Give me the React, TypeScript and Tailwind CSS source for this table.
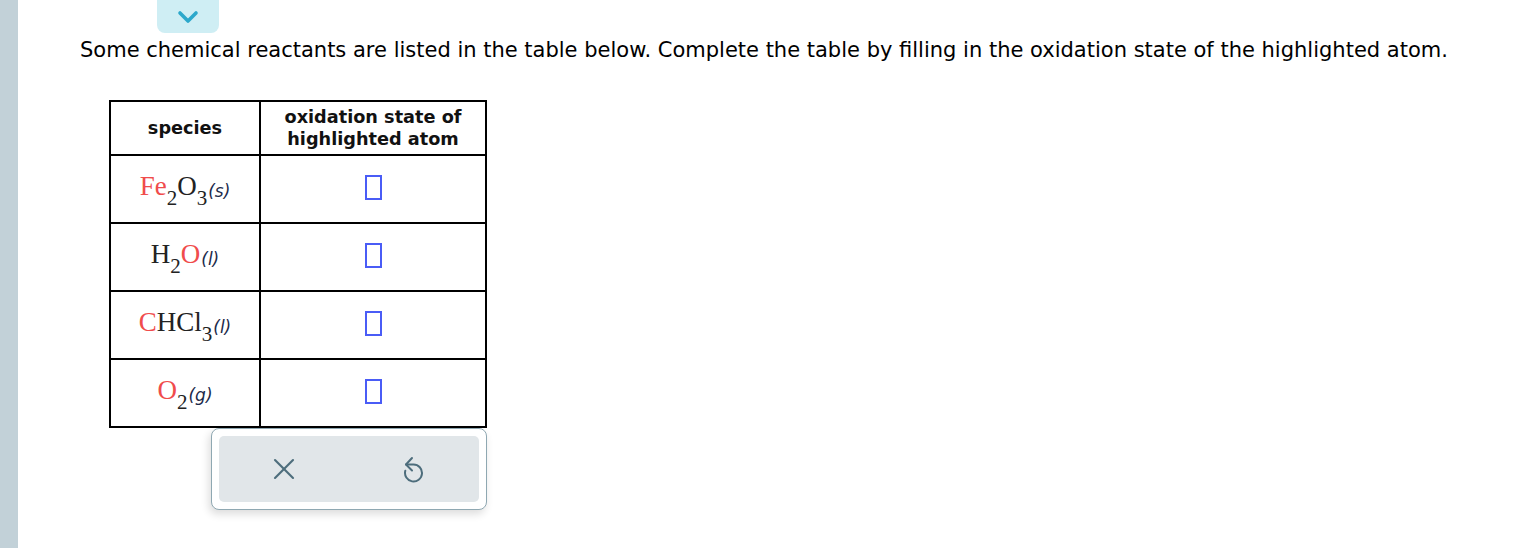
import { X } from "lucide-react";

const sans = "font-['DejaVu_Sans','Verdana',sans-serif]";
const serif = "font-['Liberation_Serif','Times_New_Roman',serif]";

type Part = { t: string; red?: boolean; sub?: boolean };

const rows: { parts: Part[]; phase: string }[] = [
  { parts: [{ t: "Fe", red: true }, { t: "2", sub: true }, { t: "O" }, { t: "3", sub: true }], phase: "(s)" },
  { parts: [{ t: "H" }, { t: "2", sub: true }, { t: "O", red: true }], phase: "(l)" },
  { parts: [{ t: "C", red: true }, { t: "HCl" }, { t: "3", sub: true }], phase: "(l)" },
  { parts: [{ t: "O", red: true }, { t: "2", sub: true }], phase: "(g)" },
];

function Formula({ parts, phase }: { parts: Part[]; phase: string }) {
  return (
    <span className="relative -top-[3px] inline-flex items-baseline whitespace-nowrap">
      {parts.map((p, i) =>
        p.sub ? (
          <span key={i} className={`${serif} text-[21px] relative top-[10px] text-[#222]`}>
            {p.t}
          </span>
        ) : (
          <span
            key={i}
            className={`${serif} text-[27px] ${p.red ? "text-[#f04c4c]" : "text-[#222]"}`}
          >
            {p.t}
          </span>
        )
      )}
      <span className={`${sans} italic text-[17px] relative top-[2px] text-[#1c2a4a] ml-[1px]`}>{phase}</span>
    </span>
  );
}

function AnswerBox() {
  return <span className="inline-block w-[17px] h-[25px] border-2 border-[#4a5cf6] mt-[3px]" />;
}

function UndoIcon() {
  return (
    <svg width="22" height="28" viewBox="0 0 22 28" fill="none" stroke="#4d6d7c" strokeWidth="2" strokeLinecap="round" strokeLinejoin="round">
      <path d="M9 3 3 9.5 9 15.5" />
      <path d="M3 9.5H10.5A8.5 8.5 0 1 1 2.3 15.8" />
    </svg>
  );
}

export default function App() {
  return (
    <div className="flex h-[548px] w-[1513px] bg-white overflow-hidden">
      <div className="w-[18px] shrink-0 bg-[#c2d1d8]" />
      <div className="flex flex-col">
        <button className="ml-[139px] h-[33px] w-[62px] rounded-b-[8px] bg-[#cfeef4] flex items-center justify-center">
          <svg width="24" height="16" viewBox="0 0 24 16" fill="none" stroke="#2ca8cb" strokeWidth="3.6" strokeLinecap="round" strokeLinejoin="round">
            <path d="M4 4l8 8 8-8" />
          </svg>
        </button>
        <p className={`${sans} mt-[3px] ml-[62px] text-[21px] leading-[28px] text-black whitespace-nowrap`}>
          Some chemical reactants are listed in the table below. Complete the table by filling in the oxidation state of the highlighted atom.
        </p>

        <table className="ml-[91px] mt-[36px] w-[378px] border-collapse border-2 border-t border-black">
          <thead>
            <tr className="h-[54px]">
              <th className={`${sans} w-[150px] border-2 border-black text-[17.7px] font-bold text-[#111]`}>species</th>
              <th className={`${sans} border-2 border-black text-[17.7px] font-bold leading-[22px] text-[#111]`}>
                oxidation state of
                <br />
                highlighted atom
              </th>
            </tr>
          </thead>
          <tbody>
            {rows.map((r, i) => (
              <tr key={i} className="h-[68px]">
                <td className="border-2 border-black text-center align-middle">
                  <Formula parts={r.parts} phase={r.phase} />
                </td>
                <td className="border-2 border-black text-center align-middle">
                  <AnswerBox />
                </td>
              </tr>
            ))}
          </tbody>
        </table>

        <div className="ml-[193px] w-[276px] h-[82px] rounded-[8px] border border-[#8fa8b2] bg-white p-[7px] shadow-[-2px_4px_8px_rgba(0,0,0,0.14)]">
          <div className="h-full rounded-[5px] bg-[#e1e6e9] flex items-center">
            <div className="flex-1 flex justify-center">
              <X size={36} strokeWidth={1.4} color="#4d6d7c" />
            </div>
            <div className="flex-1 flex justify-center">
              <UndoIcon />
            </div>
          </div>
        </div>
      </div>
    </div>
  );
}
